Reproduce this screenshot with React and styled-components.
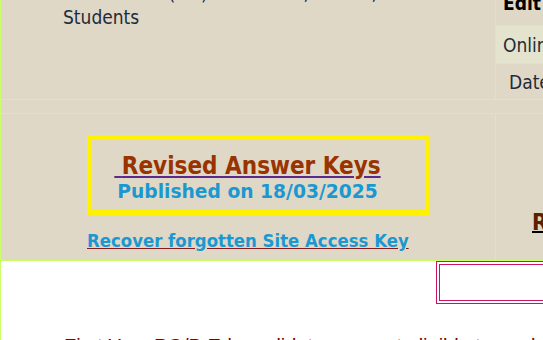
import React from 'react';
import styled, { createGlobalStyle } from 'styled-components';

const GlobalStyle = createGlobalStyle`
  html, body {
    margin: 0;
    padding: 0;
    background: #fff;
    overflow: hidden;
  }
  body {
    font-family: "DejaVu Sans Condensed", "DejaVu Sans", sans-serif;
    font-stretch: condensed;
  }
`;

const Page = styled.div`
  width: 800px;
  min-height: 400px;
  border-left: 1px solid #ccff66;
`;

const Table = styled.div`
  display: grid;
  grid-template-columns: 495px 1fr;
  margin-top: -19px;
  background: #dfd8c7;
  border-bottom: 1px solid #ccff66;
`;

const LeftCell = styled.div`
  border-right: 1px solid #ccff66;
  border-bottom: ${(p) => (p.$lined ? '1px solid #ccff66' : 'none')};
  padding: ${(p) => p.$pad || '0'};
  box-sizing: border-box;
`;

const Notice = styled.p`
  margin: 0;
  padding-left: 62px;
  font-size: 19px;
  line-height: 24px;
  color: #1e2b3a;
`;

const RightStack = styled.div`
  display: flex;
  flex-direction: column;
  border-bottom: 1px solid #ccff66;
`;

const SubRow = styled.div`
  display: flex;
  align-items: ${(p) => (p.$head ? 'flex-start' : 'center')};
  height: ${(p) => p.$h}px;
  padding-left: ${(p) => p.$indent}px;
  padding-top: ${(p) => (p.$head ? '12px' : '0')};
  box-sizing: content-box;
  background: ${(p) => (p.$light ? '#e4e3ce' : 'transparent')};
  border-bottom: ${(p) => (p.$last ? 'none' : '1px solid #ccff66')};
  font-size: 19px;
  line-height: 20px;
  font-weight: ${(p) => (p.$head ? 'bold' : 'normal')};
  color: ${(p) => (p.$head ? '#000' : '#1e2b3a')};
  white-space: nowrap;
`;

const Spacer = styled.div`
  grid-column: 1 / -1;
  height: 13px;
  border-bottom: 1px solid #ccff66;
`;

const KeyBox = styled.div`
  width: 343px;
  height: 80px;
  box-sizing: border-box;
  border: 5px solid #fff200;
  padding: 14px 22px 0 0;
  text-align: center;
`;

const KeyTitle = styled.a`
  display: block;
  font-size: 24px;
  line-height: 24px;
  font-weight: bold;
  color: #993300;
  text-decoration: underline;
  text-decoration-color: #5b2a8a;
  text-decoration-thickness: 2px;
  text-underline-offset: 2px;
`;

const KeyDate = styled.div`
  margin-top: 3px;
  font-family: "DejaVu Sans", sans-serif;
  font-stretch: normal;
  font-size: 18.7px;
  line-height: 22px;
  font-weight: bold;
  color: #1b98d2;
  white-space: nowrap;
`;

const RecoverLink = styled.a`
  display: block;
  margin-top: 15px;
  font-size: 18.4px;
  line-height: 22px;
  font-weight: bold;
  color: #1b98d2;
  text-decoration: underline;
  text-decoration-color: #8b1c1c;
  white-space: nowrap;
`;

const RightCell = styled.div`
  padding: 95px 0 0 36px;
`;

const ResultLink = styled.a`
  font-size: 22.5px;
  line-height: 26px;
  font-weight: bold;
  color: #5c1f00;
  text-decoration: underline;
  text-decoration-color: #000;
  text-decoration-thickness: 2px;
  white-space: nowrap;
`;

const TickerRow = styled.div`
  padding-left: 435px;
`;

const Ticker = styled.div`
  width: 300px;
  height: 43px;
  box-sizing: border-box;
  border: 4px double #cc1166;
`;

const Note = styled.p`
  margin: 30px 0 0;
  padding-left: 63px;
  font-family: "Liberation Sans", Arial, sans-serif;
  font-stretch: normal;
  font-size: 20px;
  line-height: 24px;
  color: #800000;
  white-space: nowrap;
`;

const App = () => {
  return (
    <>
      <GlobalStyle />
      <Page>
        <Table>
          <LeftCell $lined>
            <Notice>
              Result of all (UG) Semesters, Exams, for
              <br />
              Students
            </Notice>
          </LeftCell>
          <RightStack>
            <SubRow $head $h={32} $indent={7}>Edit Profile</SubRow>
            <SubRow $light $h={37} $indent={7}>Online Form</SubRow>
            <SubRow $last $h={35} $indent={13}>Date Sheet</SubRow>
          </RightStack>

          <Spacer />

          <LeftCell $pad="21px 0 8px 86px">
            <KeyBox>
              <KeyTitle href="#">{'\u00a0'}Revised Answer Keys</KeyTitle>
              <KeyDate>Published on 18/03/2025</KeyDate>
            </KeyBox>
            <RecoverLink href="#">Recover forgotten Site Access Key</RecoverLink>
          </LeftCell>
          <RightCell>
            <ResultLink href="#">Results</ResultLink>
          </RightCell>
        </Table>

        <TickerRow>
          <Ticker />
        </TickerRow>

        <Note>First Year PG/B.Ed candidates are not eligible to apply and</Note>
      </Page>
    </>
  );
};

export default App;
